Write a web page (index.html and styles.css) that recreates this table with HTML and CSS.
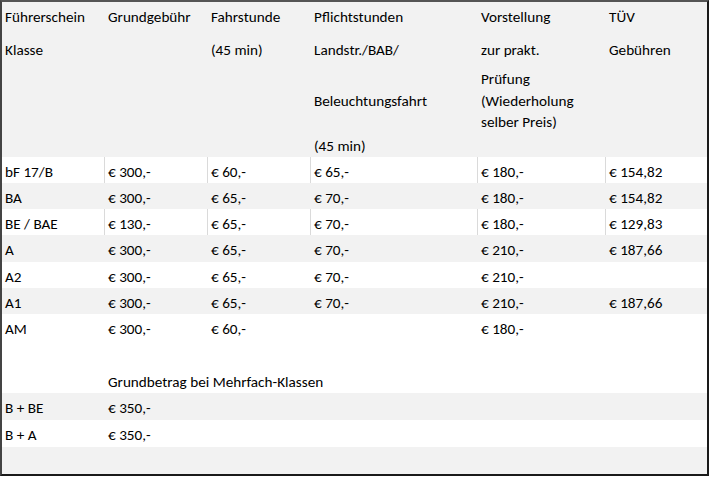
FILE: index.html
```html
<!DOCTYPE html>
<html lang="de">
<head>
<meta charset="utf-8">
<title>Preise</title>
<link rel="stylesheet" href="styles.css">
</head>
<body>
<table class="prices">
  <colgroup>
    <col class="c1"><col class="c2"><col class="c3"><col class="c4"><col class="c5"><col class="c6">
  </colgroup>
  <tr class="head">
    <td><div>Führerschein</div><div class="m13">Klasse</div></td>
    <td><div>Grundgebühr</div></td>
    <td><div>Fahrstunde</div><div class="m13">(45 min)</div></td>
    <td><div>Pflichtstunden</div><div class="m13">Landstr./BAB/</div><div class="m31">Beleuchtungsfahrt</div><div class="m25">(45 min)</div></td>
    <td><div>Vorstellung</div><div class="m13">zur prakt.</div><div class="m9 tight">Prüfung<br>(Wiederholung<br>selber Preis)</div></td>
    <td><div>TÜV</div><div class="m13">Gebühren</div></td>
  </tr>
  <tr class="white sep">
    <td>bF 17/B</td><td>€ 300,-</td><td>€ 60,-</td><td>€ 65,-</td><td>€ 180,-</td><td>€ 154,82</td>
  </tr>
  <tr class="grey">
    <td>BA</td><td>€ 300,-</td><td>€ 65,-</td><td>€ 70,-</td><td>€ 180,-</td><td>€ 154,82</td>
  </tr>
  <tr class="white sep">
    <td>BE / BAE</td><td>€ 130,-</td><td>€ 65,-</td><td>€ 70,-</td><td>€ 180,-</td><td>€ 129,83</td>
  </tr>
  <tr class="grey r27">
    <td>A</td><td>€ 300,-</td><td>€ 65,-</td><td>€ 70,-</td><td>€ 210,-</td><td>€ 187,66</td>
  </tr>
  <tr class="white">
    <td>A2</td><td>€ 300,-</td><td>€ 65,-</td><td>€ 70,-</td><td>€ 210,-</td><td></td>
  </tr>
  <tr class="grey">
    <td>A1</td><td>€ 300,-</td><td>€ 65,-</td><td>€ 70,-</td><td>€ 210,-</td><td>€ 187,66</td>
  </tr>
  <tr class="white tall">
    <td>AM</td><td>€ 300,-<div class="m32 nowrap">Grundbetrag bei Mehrfach-Klassen</div></td><td>€ 60,-</td><td></td><td>€ 180,-</td><td></td>
  </tr>
  <tr class="grey r27">
    <td>B + BE</td><td>€ 350,-</td><td></td><td></td><td></td><td></td>
  </tr>
  <tr class="white r27">
    <td>B + A</td><td>€ 350,-</td><td></td><td></td><td></td><td></td>
  </tr>
  <tr class="grey r27">
    <td></td><td></td><td></td><td></td><td></td><td></td>
  </tr>
</table>
</body>
</html>
```

FILE: styles.css
```css
html, body {
  margin: 0;
  padding: 0;
  background: #ffffff;
}

body {
  font-family: "Carlito", "Lato", "Liberation Sans", sans-serif;
  font-size: 15.2px;
  color: #000;
}

.prices {
  border-collapse: separate;
  border-spacing: 0;
  table-layout: fixed;
  width: 709px;
  background: #f2f2f2;
  border-style: solid;
  border-width: 2px 2px 2px 2px;
  border-color: #555 #1a1a1a #1a1a1a #444;
}

.c1 { width: 102px; }
.c2 { width: 103px; }
.c3 { width: 103px; }
.c4 { width: 167px; }
.c5 { width: 128px; }
.c6 { width: 102px; }

.prices td {
  padding: 5px 0 0 4px;
  vertical-align: top;
  line-height: 21px;
  height: 26px;
  box-sizing: border-box;
  white-space: nowrap;
}

.prices td:first-child {
  padding-left: 3px;
}

.head td {
  height: 155px;
  line-height: 20px;
}

.white td { background: #ffffff; }
.grey td { background: #f2f2f2; }

.sep td + td {
  box-shadow: inset 1px 0 0 #dadada;
}

.r27 td { height: 27px; }
.tall td { height: 79px; }

.m9 { margin-top: 9px; }
.m13 { margin-top: 13px; }
.m25 { margin-top: 25px; }
.m31 { margin-top: 31px; }
.m32 { margin-top: 32px; }

.tight { line-height: 21.5px; }
.nowrap { white-space: nowrap; }
```
